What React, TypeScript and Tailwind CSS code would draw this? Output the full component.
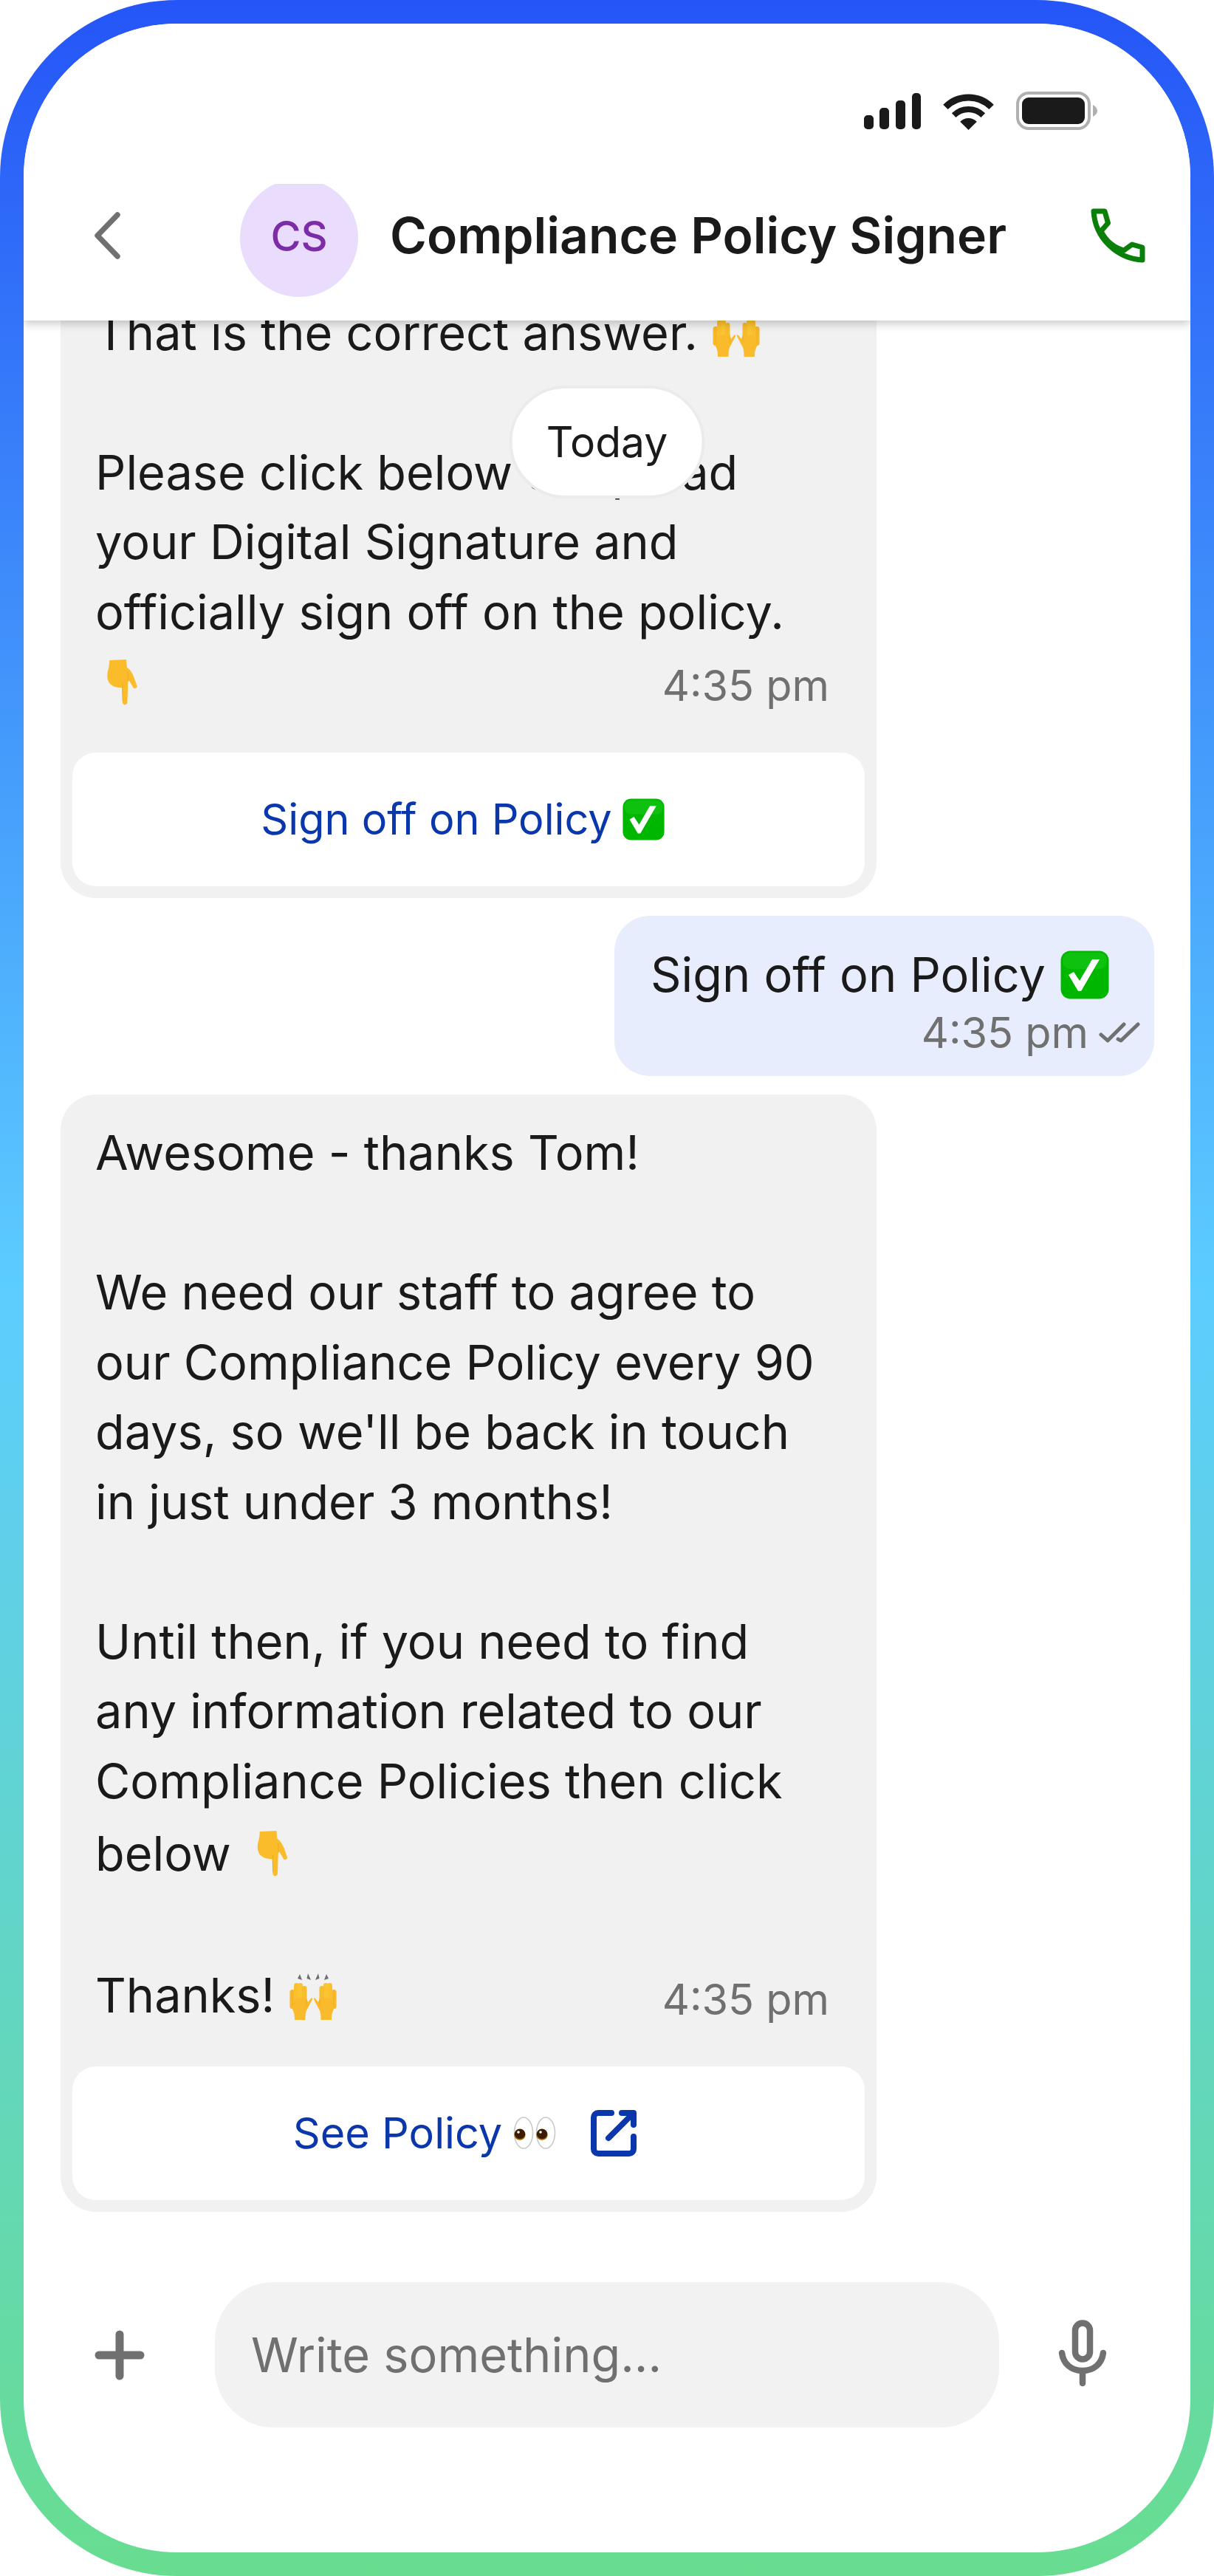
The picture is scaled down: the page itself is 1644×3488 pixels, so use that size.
import React from "react";

function Hands({ className }: { className?: string }) {
  const hand = (
    <g>
      <rect x="13.5" y="35" width="7" height="26" rx="3.5" fill="#f5b62c" />
      <rect x="19" y="26" width="7" height="30" rx="3.5" fill="#fbc02d" />
      <rect x="24.5" y="26" width="6.5" height="30" rx="3.2" fill="#fcc52f" />
      <rect x="30" y="30" width="6.5" height="28" rx="3.2" fill="#f8bd2c" />
      <path d="M14 48 L36 46 L38 52 C41 48 43 45.5 44 46.5 C45 48 40 55 38 60 C36 63 34.5 65 34.5 76 L20 76 C20 68 19 65 16 60 C14 56 13.5 52 14 48 Z" fill="#f9bb2b" />
      <path d="M17 47 L17 58 M36 48 L36 58" stroke="#e79d18" strokeWidth="0.8" fill="none" opacity="0.6" />
    </g>
  );
  return (
    <svg viewBox="11 11 68 66" className={className} aria-hidden="true">
      {hand}
      <g transform="matrix(-1 0 0 1 90 0)">{hand}</g>
      <path d="M24 20 L27 14 L30 22 Z M38 13 L42 22 L36.5 20 Z M52 13 L48 22 L53.5 20 Z M66 20 L63 14 L60 22 Z" fill="#6e6e6e" />
    </svg>
  );
}

function PointDown({ className }: { className?: string }) {
  return (
    <svg viewBox="14 11 44 66" className={className} aria-hidden="true">
      <path
        d="M19 14 L42 13 L43 24 C50 28 53 38 57 50 Q56 54 52 52 L46 42 L44.5 44 L43.5 73 Q40 78 37 73 L36 52 C26 52 16 48 16 36 C16 28 19 24 19 14 Z"
        fill="#fbbc2c"
      />
      <path d="M37 46 L37 70 M44 30 L45 42" stroke="#e39a16" strokeWidth="1" fill="none" opacity="0.55" />
    </svg>
  );
}

function CheckBox({ className }: { className?: string }) {
  return (
    <svg viewBox="0 0 66 66" className={className} aria-hidden="true">
      <rect x="0.5" y="0.5" width="65" height="65" rx="13" fill="#00b700" />
      <rect x="3" y="3" width="60" height="22" rx="10" fill="#1fcf1f" opacity="0.45" />
      <polygon points="11,33 18,29 26,41 43,12 53,12 28,55 24,55" fill="#ffffff" />
    </svg>
  );
}

function Eyes({ className }: { className?: string }) {
  return (
    <svg viewBox="13 15 60 46" className={className} aria-hidden="true">
      <ellipse cx="27" cy="38" rx="12.5" ry="21" fill="#fff" stroke="#c9c9c9" strokeWidth="1.6" />
      <ellipse cx="57" cy="38" rx="12.5" ry="21" fill="#fff" stroke="#c9c9c9" strokeWidth="1.6" />
      <circle cx="22" cy="40" r="7.5" fill="#3c1d04" />
      <circle cx="52" cy="40" r="7.5" fill="#3c1d04" />
      <path d="M15 42 A7.5 7.5 0 0 0 29 42" fill="none" stroke="#a86a08" strokeWidth="1.4" />
      <path d="M45 42 A7.5 7.5 0 0 0 59 42" fill="none" stroke="#a86a08" strokeWidth="1.4" />
      <circle cx="20" cy="37" r="1.8" fill="#fff" />
      <circle cx="50" cy="37" r="1.8" fill="#fff" />
    </svg>
  );
}

function LinkOut({ className }: { className?: string }) {
  return (
    <svg viewBox="0 0 62 63" fill="none" stroke="#0a38ac" strokeWidth="8" strokeLinecap="round" strokeLinejoin="round" className={className} aria-hidden="true">
      <path d="M28 4 H10 A6 6 0 0 0 4 10 V53 A6 6 0 0 0 10 59 H52 A6 6 0 0 0 58 53 V36" />
      <path d="M24 38 L56 6" />
      <path d="M42 4 H58 V20" />
    </svg>
  );
}

function Bubble({ children, button }: { children: React.ReactNode; button: React.ReactNode }) {
  return (
    <div className="w-[1105px] shrink-0 rounded-[48px] bg-[#f1f1f1] p-[16px]">
      <div className="pb-[48px] pl-[31px] pr-[32px] pt-[16px] text-[64.8px] leading-[94.5px] text-[#1a1a1a]">{children}</div>
      <div className="flex h-[181px] items-center justify-center rounded-[32px] bg-white text-[57.6px] text-[#0a38ac]">{button}</div>
    </div>
  );
}

function Time() {
  return <span className="mt-[8px] text-[57.6px] leading-[80px] text-[#707070]">4:35 pm</span>;
}

export default function App() {
  return (
    <div className="h-[3488px] w-[1644px] bg-white font-['Inter',sans-serif]">
      <div className="h-full w-full rounded-[240px] bg-[linear-gradient(180deg,#2555f7_0%,#5ccdff_50%,#68dd90_100%)] p-[32px]">
        <div className="flex h-full w-full flex-col overflow-hidden rounded-[208px] bg-white">
          <header className="relative z-10 shrink-0 bg-white shadow-[0_4px_12px_rgba(0,0,0,0.22)]">
            <div className="flex h-[217px] items-start justify-end gap-[30px] pr-[126px] pt-[92px]">
              <svg width="77" height="49" viewBox="0 0 77 49" fill="#1a1a1a" className="mt-[2px]" aria-hidden="true">
                <rect x="0" y="30" width="13" height="19" rx="5" />
                <rect x="21" y="20" width="13" height="29" rx="5" />
                <rect x="43" y="10" width="13" height="39" rx="5" />
                <rect x="65" y="0" width="12" height="49" rx="5" />
              </svg>
              <svg width="69" height="49" viewBox="0 0 69 49" className="mt-[3px]" aria-hidden="true">
                <path d="M3.4 17.9 A44 44 0 0 1 65.6 17.9" fill="none" stroke="#1a1a1a" strokeWidth="9" />
                <path d="M14.7 29.2 A28 28 0 0 1 54.3 29.2" fill="none" stroke="#1a1a1a" strokeWidth="8" />
                <path d="M34.5 49 L23.2 37.7 A16 16 0 0 1 45.8 37.7 Z" fill="#1a1a1a" />
              </svg>
              <svg width="110" height="52" viewBox="0 0 110 52" aria-hidden="true">
                <rect x="2" y="2" width="97" height="48" rx="15" fill="none" stroke="#b0b0b0" strokeWidth="4" />
                <rect x="8" y="8" width="85" height="36" rx="9" fill="#1a1a1a" />
                <path d="M104 18 C108 20 110 23 110 26 C110 29 108 32 104 34 Z" fill="#b0b0b0" />
              </svg>
            </div>
            <div className="flex h-[185px] items-center overflow-hidden pb-[46px] pl-[96px] pr-[61px]">
              <svg width="35" height="64" viewBox="0 0 35 64" fill="none" stroke="#707070" strokeWidth="7.5" strokeLinecap="round" strokeLinejoin="round" className="shrink-0" aria-hidden="true">
                <path d="M31 4 L4 32 L31 60" />
              </svg>
              <div className="ml-[162px] mt-[6px] flex h-[160px] w-[160px] shrink-0 items-center justify-center rounded-full bg-[#eadcfd] pb-[4px] text-[56px] font-medium text-[#7b2ca6]">
                CS
              </div>
              <div className="ml-[43px] whitespace-nowrap text-[67.8px] font-semibold text-[#1a1a1a]">Compliance Policy Signer</div>
              <svg width="74" height="74" viewBox="0 0 74 74" fill="none" stroke="#0a7f0a" strokeWidth="7" strokeLinejoin="round" className="ml-auto shrink-0" aria-hidden="true">
                <path d="M4 4 H19 L23.5 20 L14 31 C20 43 31 53 45 57 L56 49 L70 53 V70 C35 68 6 40 4 4 Z" />
              </svg>
            </div>
          </header>

          <main className="relative flex min-h-0 flex-1 flex-col justify-end gap-[24px] overflow-hidden pb-[95px] pl-[50px] pr-[49px]">
            <Bubble
              button={
                <span className="flex items-center gap-[14px] pr-[16px]">
                  Sign off on Policy <CheckBox className="h-[57px] w-[57px]" />
                </span>
              }
            >
              <div className="flex items-center gap-[18px]">That is the correct answer. <Hands className="h-[66px] w-[68px]" /></div>
              <div>&nbsp;</div>
              <div>Please click below to upload</div>
              <div>your Digital Signature and</div>
              <div>officially sign off on the policy.</div>
              <div className="flex h-[95px] items-center justify-between pr-[16px]">
                <PointDown className="ml-[14px] h-[65px] w-[44px]" />
                <Time />
              </div>
            </Bubble>

            <div className="mb-[1px] w-[731px] self-end rounded-[48px] bg-[#e7edfc] pb-[23px] pl-[49px] pr-[19px] pt-[38px]">
              <div className="flex items-center gap-[20px] whitespace-nowrap text-[64.8px] leading-[84px] text-[#1a1a1a]">
                Sign off on Policy <CheckBox className="h-[66px] w-[66px]" />
              </div>
              <div className="flex items-center justify-end gap-[14px] leading-none">
                <span className="text-[57.6px] leading-[72px] text-[#707070]">4:35 pm</span>
                <svg width="56" height="28" viewBox="0 0 56 28" fill="none" stroke="#707070" strokeWidth="5" strokeLinecap="round" strokeLinejoin="round" aria-hidden="true">
                  <path d="M3 17 L12 25 L34 3" />
                  <path d="M26 23 L30 25 L53 3" />
                </svg>
              </div>
            </div>

            <Bubble
              button={
                <span className="flex items-center pr-[10px]">
                  See Policy <Eyes className="ml-[15px] h-[46px] w-[60px]" />
                  <LinkOut className="ml-[45px] h-[63px] w-[62px]" />
                </span>
              }
            >
              <div>Awesome - thanks Tom!</div>
              <div>&nbsp;</div>
              <div>We need our staff to agree to</div>
              <div>our Compliance Policy every 90</div>
              <div>days, so we'll be back in touch</div>
              <div>in just under 3 months!</div>
              <div>&nbsp;</div>
              <div>Until then, if you need to find</div>
              <div>any information related to our</div>
              <div>Compliance Policies then click</div>
              <div className="flex h-[101.5px] items-center">below <PointDown className="ml-[31px] h-[65px] w-[49px]" /></div>
              <div>&nbsp;</div>
              <div className="flex h-[95px] items-center justify-between pr-[16px]">
                <span className="flex items-center gap-[18px]">Thanks! <Hands className="h-[66px] w-[68px]" /></span>
                <Time />
              </div>
            </Bubble>

            <div className="absolute left-1/2 top-[88px] flex h-[153px] w-[265px] -translate-x-1/2 items-center justify-center rounded-full border-4 border-[#ebebeb] bg-white text-[57px] text-[#1a1a1a]">
              Today
            </div>
          </main>

          <footer className="flex h-[366px] shrink-0 items-start pl-[96px]">
            <svg width="68" height="68" viewBox="0 0 68 68" fill="none" stroke="#707070" strokeWidth="11" strokeLinecap="round" className="mt-[65px] shrink-0" aria-hidden="true">
              <path d="M34 6 V62 M6 34 H62" />
            </svg>
            <div className="ml-[95px] flex h-[197px] w-[1062px] shrink-0 items-center rounded-[80px] bg-[#f2f2f2] pl-[49px] text-[64.8px] text-[#707070]">
              Write something...
            </div>
            <svg width="66" height="91" viewBox="0 0 66 91" fill="none" stroke="#707070" strokeWidth="8.5" strokeLinecap="round" className="ml-[80px] mt-[51px] shrink-0" aria-hidden="true">
              <rect x="23" y="4.5" width="20" height="49" rx="10" />
              <path d="M5 45 C7 60 18 69 33 69 C48 69 59 60 61 45 M33 69 V86" />
            </svg>
          </footer>
        </div>
      </div>
    </div>
  );
}
